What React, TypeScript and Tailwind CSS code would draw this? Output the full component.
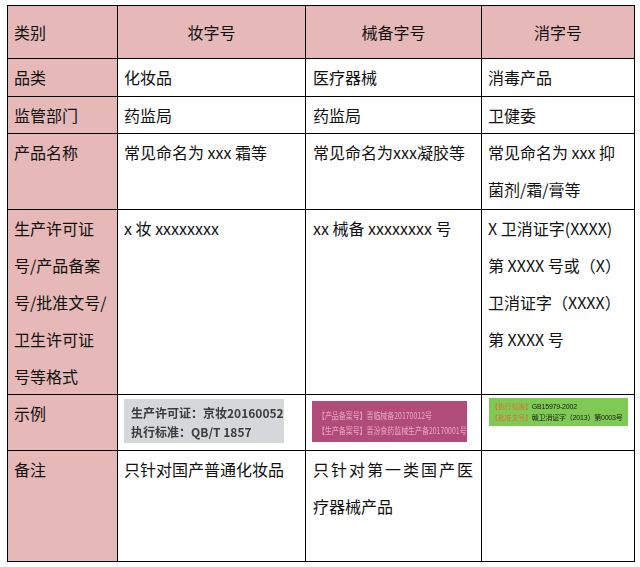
import React from "react"

const pink = "bg-[#e6b8b7]"

function Cell({ children, className = "" }: { children?: React.ReactNode; className?: string }) {
  return <div className={`border-r border-b border-black text-[16px] leading-[37px] ${className}`}>{children}</div>
}

function LicenseImage() {
  return (
    <div className="w-[160px] h-[44px] bg-[#d6d7db] pl-[7px] pt-[4px] text-[12px] leading-[19px] font-bold text-[#3b3b3b] blur-[0.4px]">
      <div>生产许可证：京妆20160052</div>
      <div>执行标准：QB/T 1857</div>
    </div>
  )
}

function FilingImage() {
  return (
    <div className="w-[155px] h-[41px] bg-[#b14c7a] pl-[6px] pt-[7px] text-[9px] leading-[15px] text-[#eaa6c6] blur-[0.3px] overflow-hidden whitespace-nowrap">
      <div className="origin-left scale-x-[0.77]">【产品备案号】晋临械备20170012号</div>
      <div className="origin-left scale-x-[0.77]">【生产备案号】晋汾食药监械生产备20170001号</div>
    </div>
  )
}

function DisinfectImage() {
  return (
    <div className="w-[139px] h-[28px] bg-[#7fc955] pl-[2px] pt-[3px] font-['Liberation_Sans','Noto_Sans_CJK_SC',sans-serif] text-[7px] leading-[11px] tracking-[-0.2px] text-[#1a1a1a] blur-[0.3px] whitespace-nowrap">
      <div>
        <span className="text-[#e0703a]">【执行标准】</span>GB15979-2002
      </div>
      <div>
        <span className="text-[#e0703a]">【批准文号】</span>赣卫消证字（2013）第0003号
      </div>
    </div>
  )
}

export default function App() {
  return (
    <div className="w-[640px] h-[567px] bg-white pt-[5px] pl-[7px] font-['Noto_Sans_CJK_SC','Noto_Sans',sans-serif] text-[#111]">
      <div className="grid w-fit grid-cols-[110px_188px_176px_153px] grid-rows-[53px_38px_37px_76px_185px_56px_111px] border-l border-t border-black">
        {/* header */}
        <Cell className={`${pink} flex items-center pl-[6px]`}>类别</Cell>
        <Cell className={`${pink} flex items-center justify-center`}>妆字号</Cell>
        <Cell className={`${pink} flex items-center justify-center`}>械备字号</Cell>
        <Cell className={`${pink} flex items-center justify-center`}>消字号</Cell>

        <Cell className={`${pink} pl-[6px]`}>品类</Cell>
        <Cell className="pl-[6px]">化妆品</Cell>
        <Cell className="pl-[7px]">医疗器械</Cell>
        <Cell className="pl-[6px]">消毒产品</Cell>

        <Cell className={`${pink} pl-[6px]`}>监管部门</Cell>
        <Cell className="pl-[6px]">药监局</Cell>
        <Cell className="pl-[7px]">药监局</Cell>
        <Cell className="pl-[6px]">卫健委</Cell>

        <Cell className={`${pink} pl-[6px]`}>产品名称</Cell>
        <Cell className="pl-[6px]">常见命名为 xxx 霜等</Cell>
        <Cell className="pl-[7px] whitespace-nowrap">常见命名为xxx凝胶等</Cell>
        <Cell className="pl-[6px]">
          常见命名为 xxx 抑<br />菌剂/霜/膏等
        </Cell>

        <Cell className={`${pink} pl-[6px]`}>
          生产许可证<br />号/产品备案<br />号/批准文号/<br />卫生许可证<br />号等格式
        </Cell>
        <Cell className="pl-[6px]">x 妆 xxxxxxxx</Cell>
        <Cell className="pl-[7px]">xx 械备 xxxxxxxx 号</Cell>
        <Cell className="pl-[6px] whitespace-nowrap">
          X 卫消证字(XXXX)<br />第 XXXX 号或（X）<br />卫消证字（XXXX）<br />第 XXXX 号
        </Cell>

        <Cell className={`${pink} pl-[6px]`}>示例</Cell>
        <Cell className="pl-[6px] pt-[4px]">
          <LicenseImage />
        </Cell>
        <Cell className="pl-[6px] pt-[6px]">
          <FilingImage />
        </Cell>
        <Cell className="pl-[7px] pt-[3px]">
          <DisinfectImage />
        </Cell>

        <Cell className={`${pink} pl-[6px]`}>备注</Cell>
        <Cell className="pl-[6px]">只针对国产普通化妆品</Cell>
        <Cell className="pl-[7px]">
          <span className="tracking-[2px]">只针对第一类国产医</span>
          <br />
          疗器械产品
        </Cell>
        <Cell />
      </div>
    </div>
  )
}
